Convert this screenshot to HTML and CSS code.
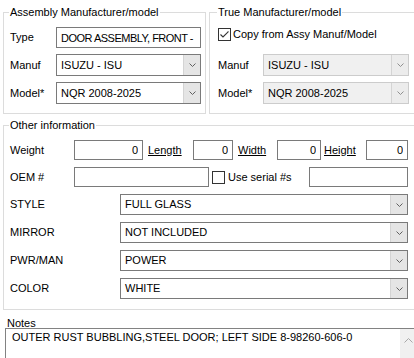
FILE: index.html
```html
<!DOCTYPE html>
<html>
<head>
    <title>Part details</title>
    <meta name="viewport" content="width=device-width, initial-scale=1.0">
    <link rel="stylesheet" href="styles.css">
</head>
<body>
    <div class="top">
        <fieldset class="box box-assy">
            <legend>Assembly Manufacturer/model</legend>
            <div class="rows">
                <label>Type</label>
                <input class="field tight" type="text" value="DOOR ASSEMBLY, FRONT -">
                <label>Manuf</label>
                <div class="combo">
                    <span class="val">ISUZU - ISU</span>
                    <span class="drop"><svg width="7" height="4" viewBox="0 0 7 4"><polyline points="0.5,0.5 3.5,3.5 6.5,0.5" fill="none" stroke="#606060" stroke-width="1"/></svg></span>
                </div>
                <label>Model*</label>
                <div class="combo">
                    <span class="val">NQR 2008-2025</span>
                    <span class="drop"><svg width="7" height="4" viewBox="0 0 7 4"><polyline points="0.5,0.5 3.5,3.5 6.5,0.5" fill="none" stroke="#606060" stroke-width="1"/></svg></span>
                </div>
            </div>
        </fieldset>

        <fieldset class="box box-true">
            <legend>True Manufacturer/model</legend>
            <div class="rows">
                <label class="check">
                    <span class="cb"><svg width="11" height="11" viewBox="0 0 11 11"><polyline points="1.5,5.5 4,8 9.5,2.5" fill="none" stroke="#333" stroke-width="1.1"/></svg></span>
                    Copy from Assy Manuf/Model
                </label>
                <label>Manuf</label>
                <div class="combo off">
                    <span class="val">ISUZU - ISU</span>
                    <span class="drop"><svg width="7" height="4" viewBox="0 0 7 4"><polyline points="0.5,0.5 3.5,3.5 6.5,0.5" fill="none" stroke="#909090" stroke-width="1"/></svg></span>
                </div>
                <label>Model*</label>
                <div class="combo off">
                    <span class="val">NQR 2008-2025</span>
                    <span class="drop"><svg width="7" height="4" viewBox="0 0 7 4"><polyline points="0.5,0.5 3.5,3.5 6.5,0.5" fill="none" stroke="#909090" stroke-width="1"/></svg></span>
                </div>
            </div>
        </fieldset>
    </div>

    <fieldset class="box other">
        <legend>Other information</legend>

        <div class="line">
            <label class="lbl">Weight</label>
            <input class="field num w69" type="text" value="0">
            <a class="lnk lnk-len">Length</a>
            <input class="field num w40" type="text" value="0">
            <a class="lnk lnk-wid">Width</a>
            <input class="field num w44" type="text" value="0">
            <a class="lnk lnk-hgt">Height</a>
            <input class="field num w42" type="text" value="0">
        </div>

        <div class="line">
            <label class="lbl">OEM #</label>
            <input class="field w135" type="text" value="">
            <label class="serial"><span class="cb"></span>Use serial #s</label>
            <input class="field w99" type="text" value="">
        </div>

        <div class="line sel">
            <label class="lbl wide">STYLE</label>
            <div class="combo w288">
                <span class="val">FULL GLASS</span>
                <span class="drop"><svg width="7" height="4" viewBox="0 0 7 4"><polyline points="0.5,0.5 3.5,3.5 6.5,0.5" fill="none" stroke="#606060" stroke-width="1"/></svg></span>
            </div>
        </div>
        <div class="line sel">
            <label class="lbl wide">MIRROR</label>
            <div class="combo w288">
                <span class="val">NOT INCLUDED</span>
                <span class="drop"><svg width="7" height="4" viewBox="0 0 7 4"><polyline points="0.5,0.5 3.5,3.5 6.5,0.5" fill="none" stroke="#606060" stroke-width="1"/></svg></span>
            </div>
        </div>
        <div class="line sel">
            <label class="lbl wide">PWR/MAN</label>
            <div class="combo w288">
                <span class="val">POWER</span>
                <span class="drop"><svg width="7" height="4" viewBox="0 0 7 4"><polyline points="0.5,0.5 3.5,3.5 6.5,0.5" fill="none" stroke="#606060" stroke-width="1"/></svg></span>
            </div>
        </div>
        <div class="line sel">
            <label class="lbl wide">COLOR</label>
            <div class="combo w288">
                <span class="val">WHITE</span>
                <span class="drop"><svg width="7" height="4" viewBox="0 0 7 4"><polyline points="0.5,0.5 3.5,3.5 6.5,0.5" fill="none" stroke="#606060" stroke-width="1"/></svg></span>
            </div>
        </div>
    </fieldset>

    <div class="notes-label">Notes</div>
    <div class="notes">
        <div class="notes-text">OUTER RUST BUBBLING,STEEL DOOR; LEFT SIDE 8-98260-606-0</div>
        <div class="scroll"><svg width="9" height="5" viewBox="0 0 9 5"><polyline points="0.5,4.5 4.5,0.5 8.5,4.5" fill="none" stroke="#a8a8a8" stroke-width="1"/></svg></div>
    </div>
</body>
</html>
```

FILE: styles.css
```css
* {
    box-sizing: border-box;
}

body {
    margin: 0;
    width: 414px;
    height: 358px;
    overflow: hidden;
    background-color: #fff;
    color: #000;
    font: 11px/13px "Liberation Sans", Arial, sans-serif;
}

.top {
    display: flex;
    gap: 3px;
    padding-left: 3px;
}

.box {
    flex: none;
    min-width: 0;
    margin: 6px 0 0;
    padding: 8px 4px 9px 5px;
    border: 1px solid #dcdcdc;
}

.box legend {
    padding: 0 1px;
    line-height: 13px;
}

.box-assy {
    width: 203px;
}

.box-true {
    width: 220px;
    padding-left: 7px;
}

.rows {
    display: grid;
    grid-template-columns: 46px 145px;
    grid-template-rows: 21px 22px 22px;
    row-gap: 6px;
    align-items: center;
    margin-left: 1px;
}

.box-true .rows {
    grid-template-columns: 45px 146px;
}

.field {
    height: 100%;
    width: 100%;
    margin: 0;
    padding: 0 4px;
    border: 1px solid #7a7a7a;
    border-radius: 0;
    background-color: #fff;
    color: #000;
    font: inherit;
    outline: none;
}

.field.tight {
    letter-spacing: -0.5px;
}

.num {
    text-align: right;
    padding-right: 4px;
}

.combo {
    display: flex;
    height: 100%;
    border: 1px solid #7a7a7a;
    background-color: #fff;
}

.combo .val {
    flex: 1;
    display: flex;
    align-items: center;
    padding: 0 4px;
    overflow: hidden;
    white-space: nowrap;
}

.combo .drop {
    width: 17px;
    display: flex;
    align-items: center;
    justify-content: center;
    background-color: #e5e5e5;
    border-left: 1px solid #d4d4d4;
}

.combo.off {
    background-color: #f0f0f0;
    border-color: #cccccc;
}

.combo.off .drop {
    background-color: #ececec;
}

.cb {
    width: 13px;
    height: 13px;
    flex: none;
    display: flex;
    align-items: center;
    justify-content: center;
    border: 1px solid #333;
    background-color: #fff;
}

.check {
    grid-column: 1 / -1;
    align-self: start;
    display: flex;
    align-items: center;
    gap: 2px;
    margin-top: 1px;
}

/* other information */
.other {
    width: 420px;
    margin: 5px 0 0 3px;
    padding: 8px 4px 10px 5px;
}

.line {
    display: flex;
    align-items: center;
    height: 20px;
    margin-left: 1px;
}

.line + .line {
    margin-top: 7px;
}

.line.sel {
    height: 21px;
}

.lbl {
    width: 64px;
    flex: none;
}

.lbl.wide {
    width: 110px;
}

.lnk {
    flex: none;
    text-decoration: underline;
    cursor: pointer;
}

.lnk-len {
    width: 50px;
    padding-left: 5px;
}

.lnk-wid {
    width: 44px;
    padding-left: 5px;
}

.lnk-hgt {
    width: 45px;
    padding-left: 3px;
}

.w69 { width: 69px; }
.w40 { width: 40px; }
.w44 { width: 44px; }
.w42 { width: 42px; }
.w135 { width: 135px; }
.w99 { width: 99px; }
.w288 { width: 288px; }

.line .field,
.line .combo {
    flex: none;
}

.serial {
    width: 100px;
    flex: none;
    display: flex;
    align-items: center;
    gap: 3px;
    padding-left: 3px;
}

/* notes */
.notes-label {
    margin: 8px 0 0 7px;
    line-height: 10px;
}

.notes {
    display: flex;
    width: 413px;
    height: 40px;
    margin-left: 5px;
    border: 1px solid #828282;
}

.notes-text {
    flex: 1;
    padding: 2px 6px;
    white-space: nowrap;
}

.scroll {
    width: 17px;
    display: flex;
    justify-content: center;
    padding-top: 9px;
    background-color: #f0f0f0;
}
```
